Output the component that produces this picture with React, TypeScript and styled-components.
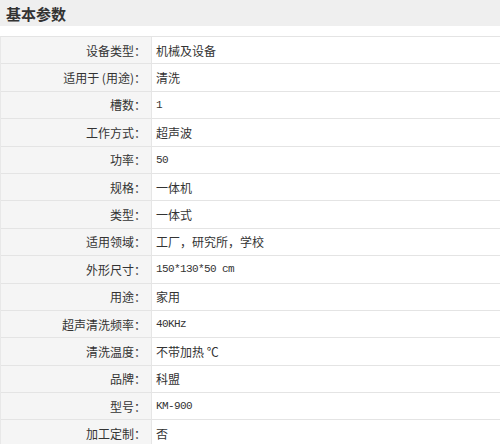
import React from "react";
import styled, { createGlobalStyle } from "styled-components";

const Global = createGlobalStyle`
  html, body { margin: 0; padding: 0; background: #ffffff; }
  body { font-family: "Noto Sans CJK SC", "Liberation Sans", sans-serif; color: #333; }
`;

const Page = styled.div`
  width: 500px;
  height: 444px;
  overflow: hidden;
  background: #fff;
`;

const Header = styled.div`
  height: 26px;
  background: #efefef;
  display: flex;
  align-items: center;
  padding-left: 6px;
  margin-bottom: 10px;
`;

const Title = styled.h2`
  margin: 0;
  font-size: 15px;
  font-weight: 700;
  color: #333;
  line-height: 1;
`;

const Table = styled.div`
  display: grid;
  grid-template-columns: 151px 1fr;
  grid-auto-rows: 27.4px;
  border-top: 1px solid #e4e4e4;
  border-left: 1px solid #e8e8e8;
`;

const Label = styled.div`
  background: #f5f5f5;
  border-bottom: 1px solid #e4e4e4;
  border-right: 1px solid #e6e6e6;
  display: flex;
  align-items: center;
  justify-content: flex-end;
  padding-right: 5px;
  font-size: 12px;
  color: #333;
  white-space: nowrap;
`;

const Value = styled.div<{ $latin?: boolean }>`
  border-bottom: 1px solid #e4e4e4;
  display: flex;
  align-items: center;
  padding-left: 4px;
  white-space: nowrap;
  color: #333;
  font-family: ${(p) =>
    p.$latin
      ? `"Liberation Mono", "DejaVu Sans Mono", monospace`
      : `"Noto Sans CJK SC", "Liberation Sans", sans-serif`};
  font-size: ${(p) => (p.$latin ? "11px" : "12px")};
  letter-spacing: ${(p) => (p.$latin ? "-0.6px" : "0")};
`;

const rows: { k: string; v: string; latin?: boolean }[] = [
  { k: "设备类型", v: "机械及设备" },
  { k: "适用于 (用途)", v: "清洗" },
  { k: "槽数", v: "1", latin: true },
  { k: "工作方式", v: "超声波" },
  { k: "功率", v: "50", latin: true },
  { k: "规格", v: "一体机" },
  { k: "类型", v: "一体式" },
  { k: "适用领域", v: "工厂，研究所，学校" },
  { k: "外形尺寸", v: "150*130*50 cm", latin: true },
  { k: "用途", v: "家用" },
  { k: "超声清洗频率", v: "40KHz", latin: true },
  { k: "清洗温度", v: "不带加热 ℃" },
  { k: "品牌", v: "科盟" },
  { k: "型号", v: "KM-900", latin: true },
  { k: "加工定制", v: "否" },
];

export default function App() {
  return (
    <Page>
      <Global />
      <Header>
        <Title>基本参数</Title>
      </Header>
      <Table>
        {rows.map((r) => (
          <React.Fragment key={r.k}>
            <Label>{r.k}：</Label>
            <Value $latin={r.latin}>{r.v}</Value>
          </React.Fragment>
        ))}
      </Table>
    </Page>
  );
}
